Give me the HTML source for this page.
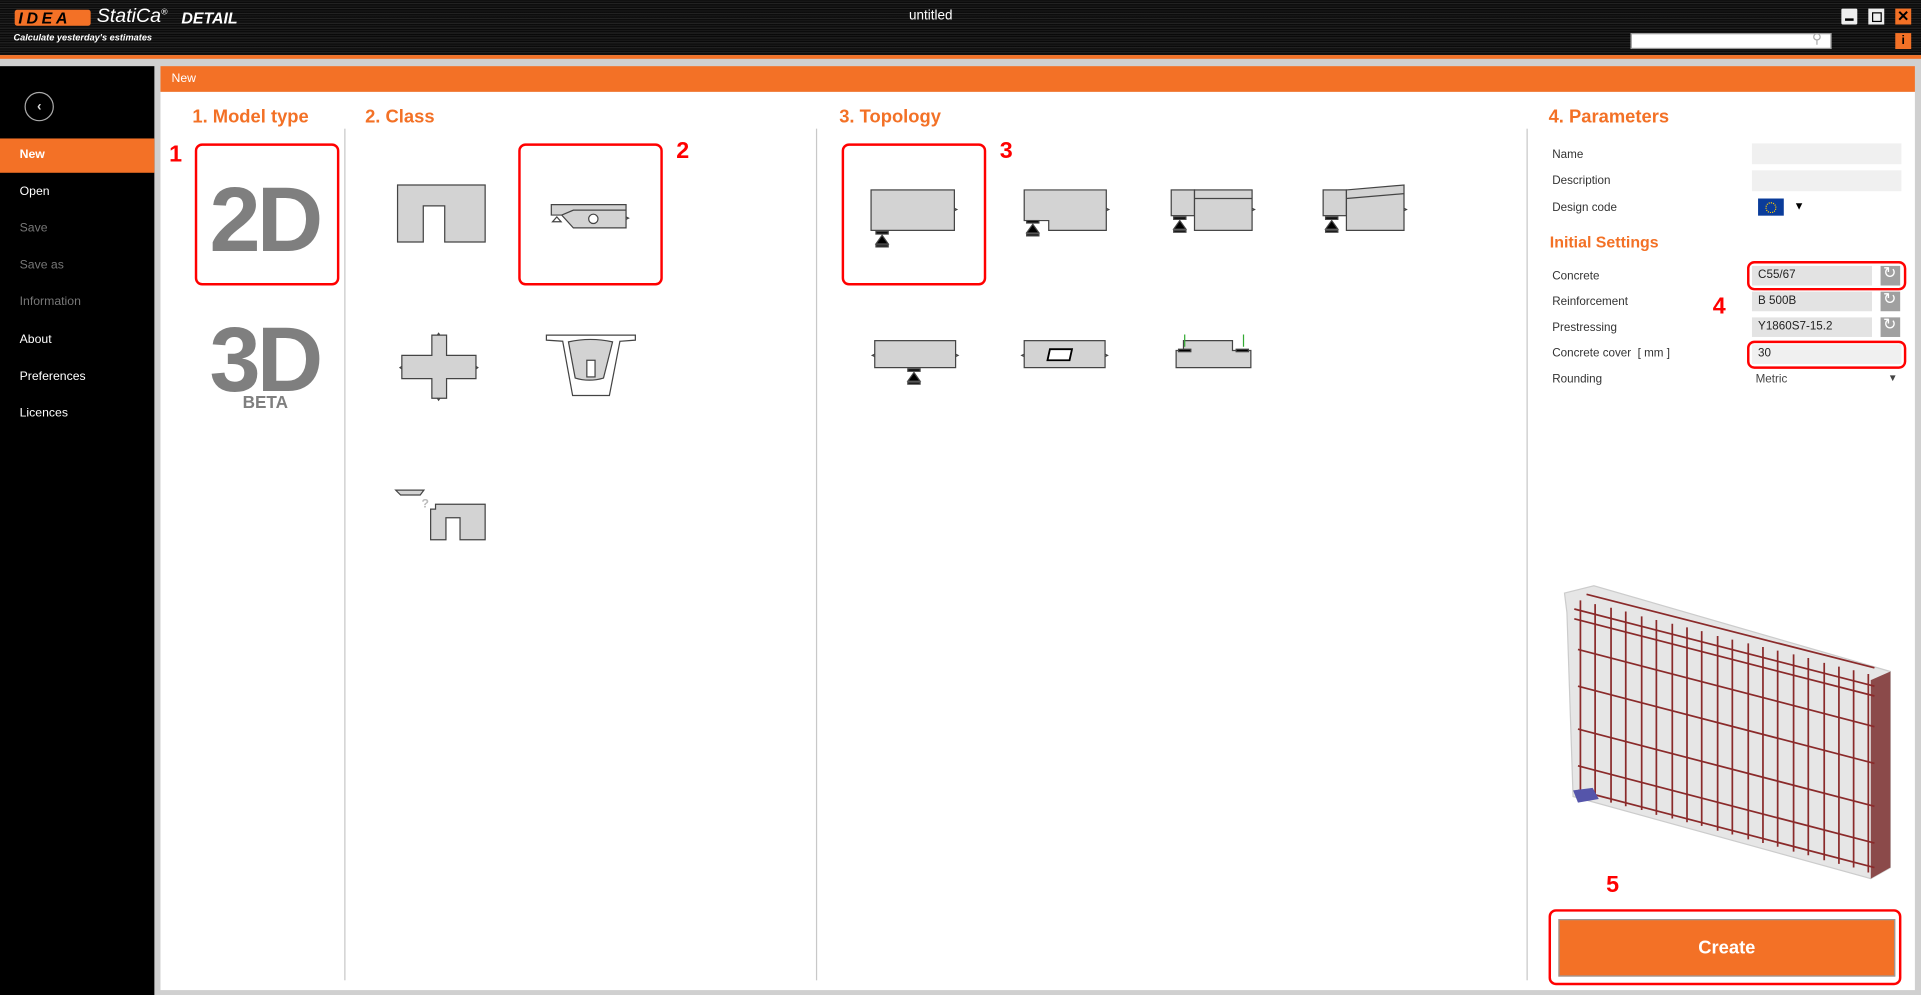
<!DOCTYPE html>
<html><head><meta charset="utf-8"><style>
html,body{margin:0;padding:0;width:1921px;height:995px;overflow:hidden;background:#d0d0d0;font-family:"Liberation Sans",sans-serif}
#w{position:absolute;left:0;top:0;width:1568px;height:812px;transform:scale(1.22513,1.22537);transform-origin:0 0;background:#d0d0d0}
.a{position:absolute}
.t{position:absolute;white-space:nowrap}
.m{position:absolute;left:16px;font-size:10px;color:#fff}
.h{position:absolute;color:#f37126;font-weight:bold;font-size:15px;white-space:nowrap}
.rb{position:absolute;border:2.5px solid #f00;border-radius:6px;box-sizing:border-box}
.rn{position:absolute;color:#f00;font-weight:bold;font-size:19px}
.lb{position:absolute;left:1267px;font-size:9.5px;color:#333}
.in{position:absolute;left:1430px;width:98px;height:16px;background:#e3e3e3;font-size:9.5px;color:#222;line-height:16px;padding-left:5px;box-sizing:border-box}
.rf{position:absolute;left:1535px;width:16px;height:16px;background:#a0a0a0}
</style></head><body><div id="w">
<div class="a" style="left:0;top:0;width:1568px;height:45px;background:repeating-linear-gradient(180deg,#0a0a0a 0,#1c1c1c 1px,#050505 2px,#2a2a2a 3px,#000 4px)"></div>
<div class="a" style="left:12px;top:8px;width:62px;height:13px;background:#f37126;border-radius:2px"></div>
<div class="t" style="left:15px;top:7px;font-size:13px;font-weight:bold;font-style:italic;color:#000;letter-spacing:3px">IDEA</div>
<div class="t" style="left:79px;top:5px;font-size:16px;font-style:italic;color:#fff">StatiCa<sup style="font-size:7px">®</sup></div>
<div class="t" style="left:148px;top:7px;font-size:13px;font-weight:bold;font-style:italic;color:#fff">DETAIL</div>
<div class="t" style="left:11px;top:26px;font-size:7.5px;font-style:italic;font-weight:bold;color:#fff">Calculate yesterday's estimates</div>
<div class="t" style="left:742px;top:7px;font-size:11px;color:#fff">untitled</div>
<div class="a" style="left:1503px;top:7px;width:13px;height:13px;background:#eee;border-radius:1px"><div class="a" style="left:3px;top:8px;width:7px;height:2px;background:#000"></div></div>
<div class="a" style="left:1525px;top:7px;width:13px;height:13px;background:#eee"><div class="a" style="left:2.5px;top:2.5px;width:6px;height:6px;border:1.5px solid #000"></div></div>
<div class="a" style="left:1547px;top:7px;width:13px;height:13px;background:#f37126;color:#000;font-size:12px;font-weight:bold;text-align:center;line-height:13px">✕</div>
<div class="a" style="left:1331px;top:27px;width:164px;height:13px;background:#fff;border:1px solid #999;box-sizing:border-box"></div>
<div class="t" style="left:1479px;top:25px;font-size:11px;color:#aaa">⚲</div>
<div class="a" style="left:1547px;top:27px;width:13px;height:13px;background:#f37126;color:#000;font-size:10px;font-weight:bold;text-align:center;line-height:13px">i</div>
<div class="a" style="left:0;top:45px;width:1568px;height:3px;background:#f37126"></div>
<div class="a" style="left:0;top:54px;width:126px;height:758px;background:#000"></div>
<div class="a" style="left:20px;top:75px;width:22px;height:22px;border:1px solid #aaa;border-radius:50%;color:#ddd;font-size:11px;text-align:center;line-height:22px;font-weight:bold">‹</div>
<div class="a" style="left:0;top:113px;width:126px;height:28px;background:#f37126"></div>
<div class="m" style="top:121px;font-weight:bold">New</div>
<div class="m" style="top:151px">Open</div>
<div class="m" style="top:181px;color:#777">Save</div>
<div class="m" style="top:211px;color:#777">Save as</div>
<div class="m" style="top:241px;color:#777">Information</div>
<div class="m" style="top:272px">About</div>
<div class="m" style="top:302px">Preferences</div>
<div class="m" style="top:332px">Licences</div>
<div class="a" style="left:131px;top:54px;width:1432px;height:21px;background:#f37126"></div>
<div class="t" style="left:140px;top:59px;font-size:10px;color:#fff">New</div>
<div class="a" style="left:131px;top:75px;width:1432px;height:733px;background:#fff"></div>
<div class="a" style="left:281px;top:105px;width:1px;height:695px;background:#c8c8c8"></div>
<div class="a" style="left:666px;top:105px;width:1px;height:695px;background:#c8c8c8"></div>
<div class="a" style="left:1246px;top:105px;width:1px;height:695px;background:#c8c8c8"></div>
<div class="h" style="left:157px;top:87px">1. Model type</div>
<div class="h" style="left:298px;top:87px">2. Class</div>
<div class="h" style="left:685px;top:87px">3. Topology</div>
<div class="h" style="left:1264px;top:87px">4. Parameters</div>
<div class="rb" style="left:159px;top:117px;width:118px;height:116px"></div>
<div class="rb" style="left:423px;top:117px;width:118px;height:116px"></div>
<div class="rb" style="left:687px;top:117px;width:118px;height:116px"></div>
<div class="rn" style="left:138px;top:116px">1</div>
<div class="rn" style="left:552px;top:113px">2</div>
<div class="rn" style="left:816px;top:113px">3</div>
<div class="rn" style="left:1398px;top:240px">4</div>
<div class="rn" style="left:1311px;top:712px">5</div>
<div class="t" style="left:171px;top:136px;font-size:75px;font-weight:bold;color:#7f7f7f;letter-spacing:-3px">2D</div>
<div class="t" style="left:171px;top:250px;font-size:75px;font-weight:bold;color:#7f7f7f;letter-spacing:-3px">3D</div>
<div class="t" style="left:198px;top:320px;font-size:14px;font-weight:bold;color:#7f7f7f">BETA</div>
<svg class="a" style="left:0;top:0" width="1568" height="812" fill="#d3d3d3" stroke="#444" stroke-width="1">
<path d="M324.5 151H396V197.5H363V168H345.5V197.5H324.5Z"/>
<path d="M450 167H511V186H468L458.5 175.5H450Z"/>
<path d="M458.5 175.5L468 171.5H511" fill="none"/>
<path d="M511 177l2 1-2 1" fill="none"/>
<circle cx="484.3" cy="178.6" r="3.8" fill="#fff"/>
<path d="M454.5 177L458 181H451Z" fill="#fff"/>
<path d="M352.5 273.5H364.5V290H388.5V309H364.5V325H352.5V309H328V290H352.5Z"/>
<path d="M357 273.5l1-1.5 1 1.5M357 325l1 1.5 1-1.5M328 299l-1.5 1 1.5 1M388.5 299l1.5 1-1.5 1" fill="none"/>
<path d="M446 273.5H518.6V277.6L506 278.5L497.4 322.8H467.4L459.3 278.5L446 277.6Z" fill="#fff"/>
<path d="M464 279Q482 275 500 279L492.6 308.5Q481 312 469.5 308.5Z"/>
<rect x="479" y="294" width="6.7" height="13.6" fill="#fff"/>
<path d="M323 400H346L343 404H327Z"/>
<path d="M355.5 411.5H396V440.5H375.5V422.5H364V440.5H351.5V415.5H355.5Z"/>
<text x="344" y="414" font-size="10" fill="#bbb" stroke="none" font-weight="bold" font-family="Liberation Sans">?</text>
<rect x="711" y="155" width="68" height="33"/><rect x="715" y="189" width="10" height="2" fill="#000"/><path d="M720 192L725 199H715Z" fill="#000"/><rect x="715" y="200" width="10" height="1.5" fill="#000"/>
<path d="M836 155H903V188H856V180H836Z"/><rect x="838" y="180" width="10" height="2" fill="#000"/><path d="M843 183L848 190H838Z" fill="#000"/><rect x="838" y="191" width="10" height="1.5" fill="#000"/>
<rect x="956" y="155" width="19" height="21"/><rect x="975" y="155" width="47" height="33"/><path d="M975 162H1022"/><rect x="958" y="177" width="10" height="2" fill="#000"/><path d="M963 180L968 187H958Z" fill="#000"/><rect x="958" y="188" width="10" height="1.5" fill="#000"/>
<rect x="1080" y="155" width="19" height="21"/><path d="M1099 155L1146 151V188H1099Z"/><path d="M1099 162L1146 158"/><rect x="1082" y="177" width="10" height="2" fill="#000"/><path d="M1087 180L1092 187H1082Z" fill="#000"/><rect x="1082" y="188" width="10" height="1.5" fill="#000"/>
<rect x="714" y="278" width="66" height="22"/><rect x="741" y="301" width="10" height="2" fill="#000"/><path d="M746 304L751 311H741Z" fill="#000"/><rect x="741" y="312" width="10" height="1.5" fill="#000"/>
<rect x="836" y="278" width="66" height="22"/><path d="M857 285H875L873 294H855Z" fill="#fff" stroke="#000" stroke-width="1.5"/>
<path d="M960 286H966V278H1006V286H1021V300H960Z"/><rect x="962" y="285" width="10" height="2" fill="#000"/><rect x="1009" y="285" width="10" height="2" fill="#000"/>
<path d="M967 273V283M1015 273V283" stroke="#3a3" fill="none"/>
<path d="M779 170l2 1-2 1M903 170l2 1-2 1M1022 170l2 1-2 1M1146 170l2 1-2 1M714 289l-2 1 2 1M780 289l2 1-2 1M836 289l-2 1 2 1M902 289l2 1-2 1" fill="none"/>
</svg>
<div class="lb" style="top:121px">Name</div>
<div class="lb" style="top:142px">Description</div>
<div class="lb" style="top:164px">Design code</div>
<div class="a" style="left:1430px;top:117px;width:122px;height:17px;background:#f0f0f0"></div>
<div class="a" style="left:1430px;top:139px;width:122px;height:17px;background:#f0f0f0"></div>
<div class="a" style="left:1435px;top:162px;width:21px;height:14px;background:#0a3c9a"><div class="a" style="left:6px;top:3px;width:7px;height:7px;border:1px dotted #fc0;border-radius:50%"></div></div>
<div class="t" style="left:1464px;top:163px;font-size:9px;color:#000">▼</div>
<div class="t" style="left:1265px;top:190px;font-size:13px;font-weight:bold;color:#f37126">Initial Settings</div>
<div class="lb" style="top:220px">Concrete</div>
<div class="lb" style="top:241px">Reinforcement</div>
<div class="lb" style="top:262px">Prestressing</div>
<div class="lb" style="top:283px">Concrete cover&nbsp; [ mm ]</div>
<div class="lb" style="top:304px">Rounding</div>
<div class="in" style="top:217px">C55/67</div><div class="rf" style="top:217px"></div>
<div class="in" style="top:238px">B 500B</div><div class="rf" style="top:238px"></div>
<div class="in" style="top:259px">Y1860S7-15.2</div><div class="rf" style="top:259px"></div>
<div class="t" style="left:1537px;top:215px;font-size:13px;color:#fff">↻</div>
<div class="t" style="left:1537px;top:236px;font-size:13px;color:#fff">↻</div>
<div class="t" style="left:1537px;top:257px;font-size:13px;color:#fff">↻</div>
<div class="in" style="top:281px;width:122px;background:#f0f0f0">30</div>
<div class="t" style="left:1433px;top:304px;font-size:9.5px;color:#444">Metric</div>
<div class="t" style="left:1541px;top:304px;font-size:8px;color:#444">▼</div>
<div class="rb" style="left:1426px;top:213px;width:130px;height:24px"></div>
<div class="rb" style="left:1426px;top:278px;width:130px;height:23px"></div>
<svg class="a" style="left:0;top:0" width="1568" height="812" fill="none">
<path d="M1277 484L1301 478L1543 548V708L1527 717L1284 650L1279 500Z" fill="#e6e6e6" stroke="#ccc"/>
<path d="M1527 555L1543 548V708L1527 717Z" fill="#8b4a4a"/>
<g stroke="#8a2a2a" stroke-width="1.4">
<path d="M1290 490V648M1302 493V651M1315 496V655M1327 499V658M1340 503V661M1352 506V665M1365 509V668M1377 512V671M1389 515V674M1402 519V678M1414 522V681M1427 525V685M1439 528V688M1451 531V691M1464 534V695M1476 537V698M1489 541V702M1501 544V705M1513 547V708M1525 550V712"/>
<path d="M1285 497L1530 560M1285 505L1530 568M1288 530L1530 593M1288 560L1530 623M1288 595L1530 658M1288 625L1530 688M1288 645L1530 708M1295 485L1530 545"/>
</g>
<path d="M1284 645L1300 643L1305 652L1288 655Z" fill="#5555aa"/>
</svg>
<div class="rb" style="left:1264px;top:742px;width:288px;height:62px"></div>
<div class="a" style="left:1272px;top:750px;width:275px;height:47px;background:#f37126;border:1px solid #999;box-sizing:border-box;color:#fff;font-weight:bold;font-size:15px;text-align:center;line-height:45px">Create</div>
</div></body></html>
